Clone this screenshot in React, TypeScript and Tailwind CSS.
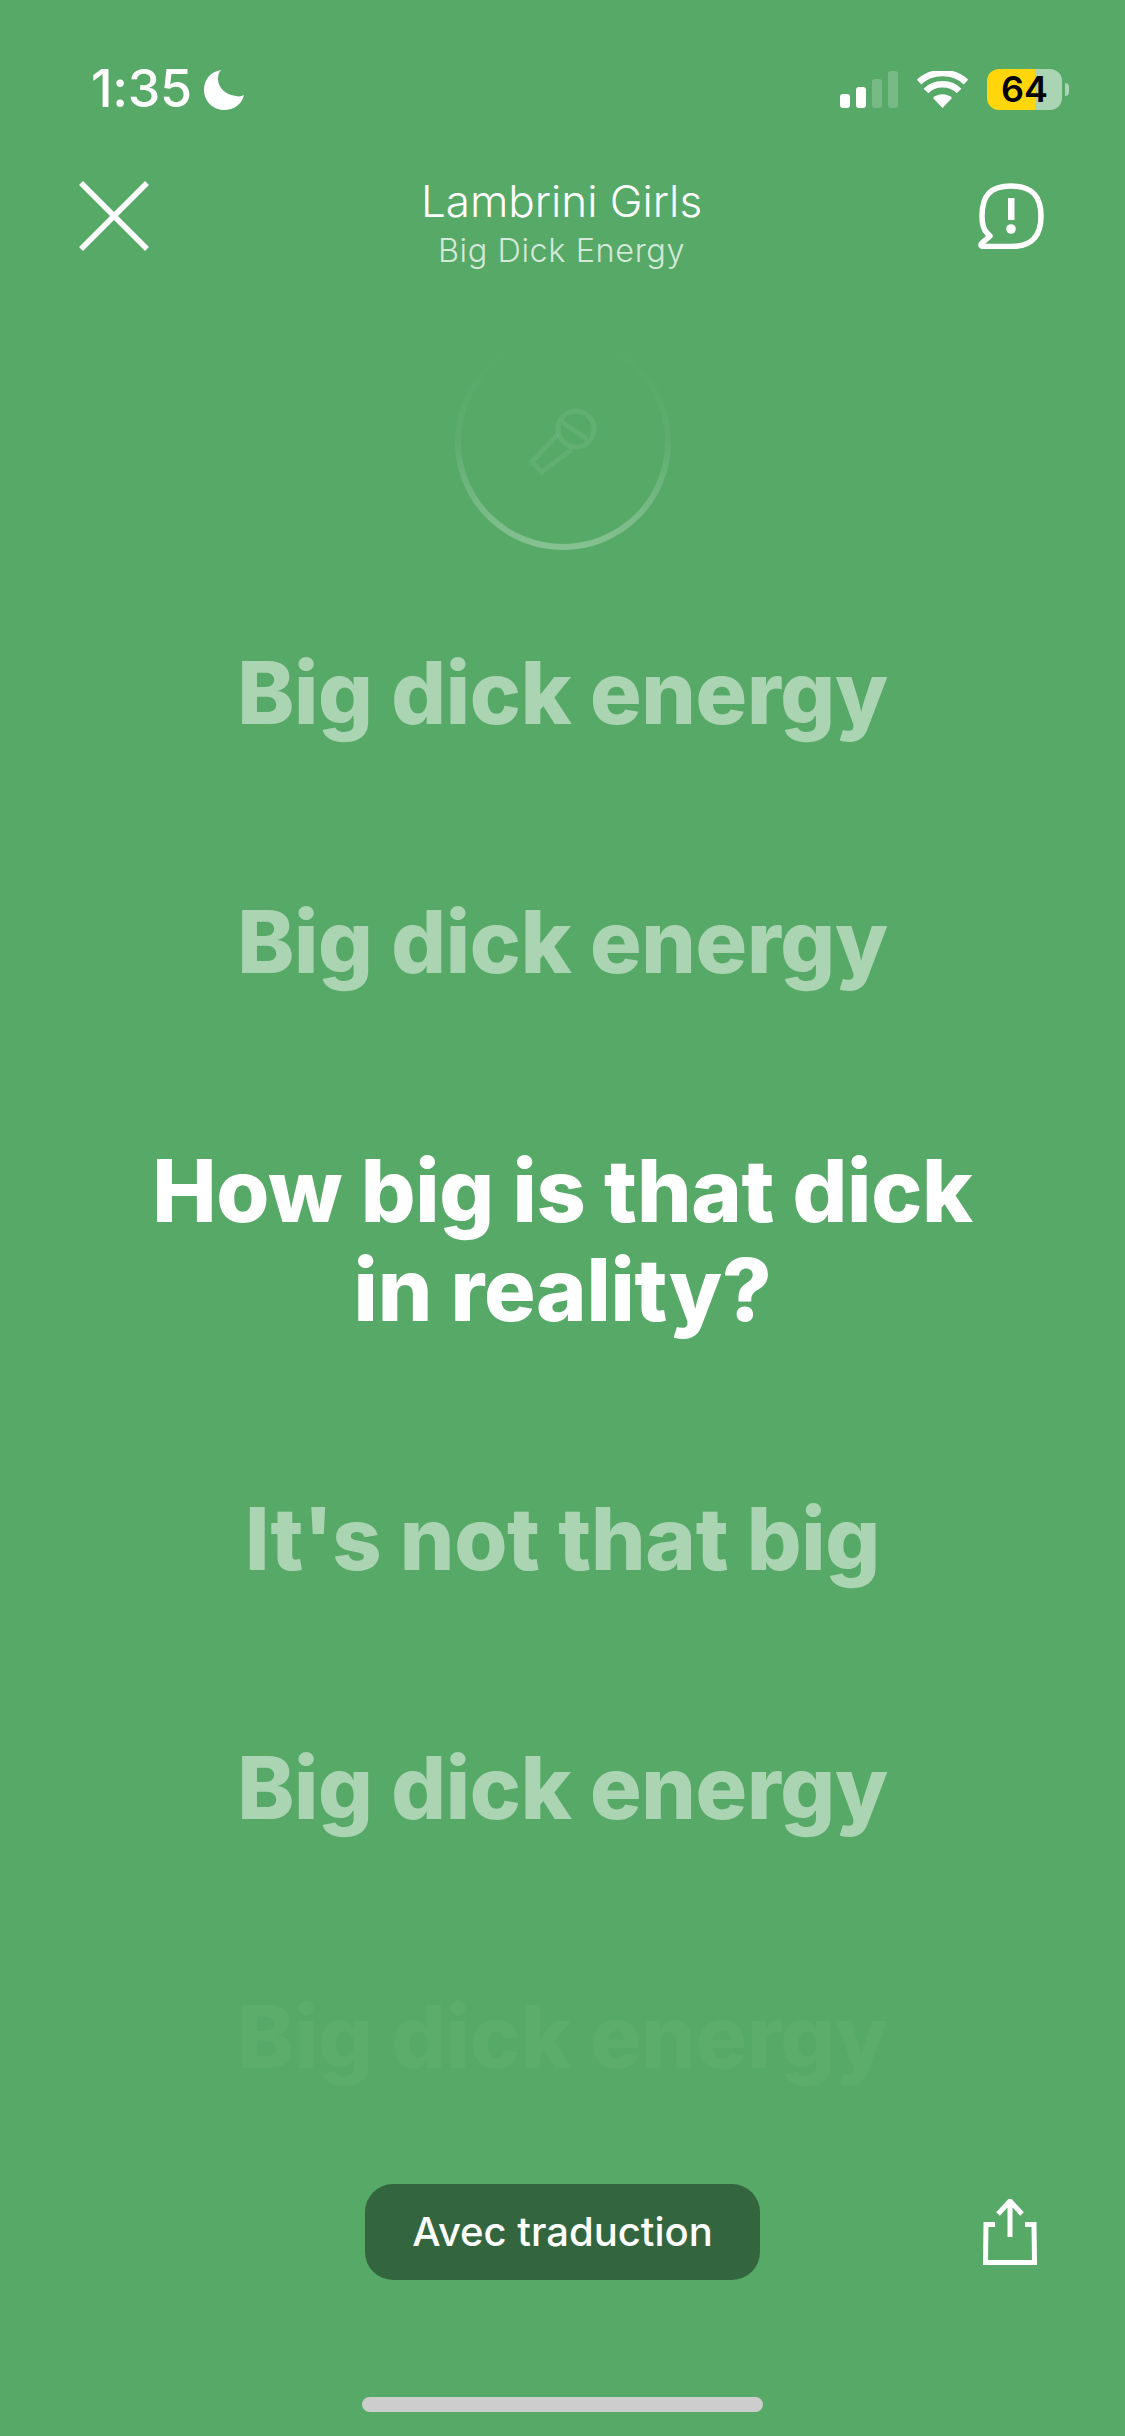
import React from 'react';

const font = { fontFamily: 'Inter, "Noto Sans", sans-serif' };

const StatusBar = () => (
  <div className="flex h-[40px] items-center justify-between pl-[91px] pr-[56px]">
    <div className="flex items-center gap-[12px]">
      <span className="text-[52px] font-medium leading-[40px] tracking-[-0.3px] text-white">1:35</span>
      <svg width="40" height="41" viewBox="0 0 40 41">
        <path d="M17 1 C6 3 0 11 0 21 C0 32 9 41 20 41 C30 41 38 35 40 26 C38 27 35 28 32 27 C22 26 14 19 14 10 C14 6 15 3 17 1 Z" fill="white" />
      </svg>
    </div>
    <div className="flex items-center">
      <div className="flex items-end gap-[6px]">
        <div className="h-[14px] w-[10px] rounded-[3px] bg-white" />
        <div className="h-[21px] w-[10px] rounded-[3px] bg-white" />
        <div className="h-[29px] w-[10px] rounded-[3px] bg-white/20" />
        <div className="h-[37px] w-[10px] rounded-[3px] bg-white/20" />
      </div>
      <svg className="ml-[19px]" width="51" height="37" viewBox="0 0 51 37">
        <path d="M25.5 37 L16 27 C21 22 30 22 35 27 Z" fill="white" />
        <path d="M9 20 C17 11 34 11 42 20" fill="none" stroke="white" strokeWidth="6.5" />
        <path d="M2 11 C15 -1 36 -1 49 11" fill="none" stroke="white" strokeWidth="6.5" />
      </svg>
      <div className="ml-[19px] flex h-[41px] w-[75px] items-center justify-center rounded-[12px] bg-[linear-gradient(90deg,#FFD60A_64%,rgba(255,255,255,0.5)_64%)]">
        <span className="text-[36px] font-semibold leading-[41px] text-black">64</span>
      </div>
      <div className="ml-[3px] h-[13px] w-[4px] rounded-r-full bg-white/50" />
    </div>
  </div>
);

const Header = () => (
  <div className="mt-[72px] grid grid-cols-[1fr_auto_1fr] items-start pl-[79px] pr-[81px]">
    <svg width="70" height="70" viewBox="0 0 70 70">
      <path d="M2 2 L68 68 M68 2 L2 68" stroke="white" strokeWidth="5.5" />
    </svg>
    <div className="flex flex-col items-center">
      <span className="mt-[-7px] text-[44px] font-light leading-[54px] text-white">Lambrini Girls</span>
      <span className="mt-[5px] text-[32.500px] font-light leading-[36px] tracking-[0.55px] text-white/75">Big Dick Energy</span>
    </div>
    <svg className="mt-[2px] justify-self-end" width="67" height="66" viewBox="0 0 67 66">
      <path
        d="M34 3 C14 3 5 12 5 33 C5 40 6 46 10 50 L13 53 L5 60 C3 62 4 63.500 7 63.500 L34 63.500 C54 63.500 64 54 64 33 C64 12 54 3 34 3 Z"
        fill="none"
        stroke="white"
        strokeWidth="5.500"
        strokeLinejoin="round"
      />
      <rect x="31" y="15" width="6.500" height="22" fill="white" />
      <circle cx="34" cy="46" r="4.800" fill="white" />
    </svg>
  </div>
);

const MicRing = () => (
  <div className="mt-[64px] flex justify-center">
    <svg width="218" height="218" viewBox="0 0 218 218">
      <defs>
        <linearGradient id="ring" x1="0" y1="0" x2="0" y2="1">
          <stop offset="0" stopColor="white" stopOpacity="0" />
          <stop offset="0.5" stopColor="white" stopOpacity="0.05" />
          <stop offset="1" stopColor="white" stopOpacity="0.28" />
        </linearGradient>
      </defs>
      <circle cx="109" cy="109" r="105" fill="none" stroke="url(#ring)" strokeWidth="6" />
      <g fill="none" stroke="white" strokeOpacity="0.07" strokeWidth="5">
        <circle cx="122" cy="96" r="18" />
        <path d="M108 89 L133 106" />
        <path d="M104 101 L78 129 L88 139 L118 116" />
      </g>
    </svg>
  </div>
);

const LyricLine = ({ children, className }: { children: React.ReactNode; className: string }) => (
  <p className={`text-center text-[86px] font-extrabold leading-[99px] tracking-[-0.3px] ${className}`}>{children}</p>
);

const Lyrics = () => (
  <div className="mt-[93px] flex flex-col items-center gap-[150px]">
    <LyricLine className="text-white/50">Big dick energy</LyricLine>
    <LyricLine className="text-white/50">Big dick energy</LyricLine>
    <LyricLine className="text-white">
      How big is that dick
      <br />
      in reality?
    </LyricLine>
    <LyricLine className="text-white/50">It's not that big</LyricLine>
    <LyricLine className="text-white/50">Big dick energy</LyricLine>
    <LyricLine className="text-white/[0.04]">Big dick energy</LyricLine>
  </div>
);

const Footer = () => (
  <div className="mt-auto flex flex-col items-center pb-[24px]">
    <div className="grid w-full grid-cols-[1fr_395px_1fr] items-center">
      <div />
      <div className="flex h-[96px] items-center justify-center rounded-[28px] bg-[#33663F] text-[40px] font-medium text-white">
        Avec traduction
      </div>
      <svg className="mr-[88px] justify-self-end" width="54" height="66" viewBox="0 0 54 66">
        <path d="M27 38 L27 3 M15 15 L27 2 L39 15" fill="none" stroke="white" strokeWidth="5" />
        <path d="M12 25.500 L3 25.500 L2.500 63.500 L51.500 63.500 L51 25.500 L42 25.500" fill="none" stroke="white" strokeWidth="5" />
      </svg>
    </div>
    <div className="mt-[117px] h-[15px] w-[401px] rounded-full bg-[#CDCDCD]" />
  </div>
);

export default function App() {
  return (
    <div className="flex h-[2436px] w-[1125px] flex-col bg-[#56A967] pt-[69px]" style={font}>
      <StatusBar />
      <Header />
      <MicRing />
      <Lyrics />
      <Footer />
    </div>
  );
}
